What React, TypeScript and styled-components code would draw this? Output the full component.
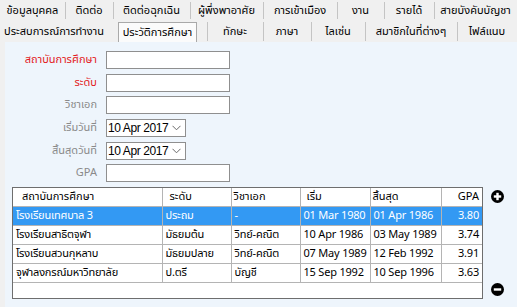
import React from "react";
import styled, { createGlobalStyle } from "styled-components";

const GlobalStyle = createGlobalStyle`
  html, body { margin: 0; padding: 0; }
  body {
    background: #f0f0f0;
    font-family: "Tahoma", "Noto Sans Thai", "Liberation Sans", "Noto Sans", sans-serif;
    font-size: 11px;
    color: #000;
  }
`;

const Root = styled.div`
  width: 517px;
  height: 307px;
  display: flex;
  flex-direction: column;
  overflow: hidden;
  background: #f0f0f0;
`;

const TabRow = styled.div<{ $h: number }>`
  display: flex;
  height: ${(p) => p.$h}px;
  align-items: stretch;
`;

const Tab = styled.div<{ $w: number; $sep?: boolean }>`
  position: relative;
  width: ${(p) => p.$w}px;
  flex: none;
  display: flex;
  align-items: center;
  justify-content: center;
  white-space: nowrap;
  color: #000;
  ${(p) =>
    p.$sep
      ? `&::before { content: ""; position: absolute; left: 0; top: 2px; bottom: 1px; width: 1px; background: #c4c4c4; }`
      : ""}
`;

const ActiveTab = styled.div<{ $w: number; $ml: number }>`
  width: ${(p) => p.$w}px;
  margin-left: ${(p) => p.$ml}px;
  margin-top: 2px;
  flex: none;
  box-sizing: border-box;
  border: 1px solid #a9a9a9;
  border-bottom: none;
  background: #fbfbfb;
  display: flex;
  align-items: center;
  justify-content: center;
  white-space: nowrap;
`;

const Spacer = styled.div<{ $w: number }>`
  width: ${(p) => p.$w}px;
  flex: none;
`;

const Panel = styled.div`
  flex: 1;
  margin-left: 5px;
  background: #eef5fc;
  display: flex;
  flex-direction: column;
  padding-top: 9px;
  box-sizing: border-box;
`;

const Form = styled.div`
  display: grid;
  grid-template-columns: 92px auto;
  column-gap: 9px;
  align-items: start;
`;

const Label = styled.div<{ $req?: boolean; $h: number }>`
  height: ${(p) => p.$h}px;
  line-height: 18px;
  text-align: right;
  color: ${(p) => (p.$req ? "#e31b23" : "#8a8a8a")};
  white-space: nowrap;
`;

const FieldCell = styled.div<{ $h: number }>`
  height: ${(p) => p.$h}px;
`;

const TextInput = styled.div<{ $w: number }>`
  width: ${(p) => p.$w}px;
  height: 18px;
  box-sizing: border-box;
  background: #fff;
  border: 1px solid #8f8f8f;
`;

const DateBox = styled.div`
  width: 80px;
  height: 18px;
  box-sizing: border-box;
  background: #fff;
  border: 1px solid #8f8f8f;
  display: flex;
  align-items: center;
  justify-content: space-between;
  padding: 0 4px 0 1px;
  font-family: "Liberation Sans", Arial, sans-serif;
  font-size: 12px;
  letter-spacing: -0.4px;
  white-space: nowrap;
  color: #000;
`;

const Chevron = styled.svg`
  width: 9px;
  height: 6px;
  flex: none;
`;

const Bottom = styled.div`
  display: flex;
  align-items: stretch;
  margin-top: 5px;
  margin-left: 7px;
  gap: 8px;
`;

const GridBox = styled.div`
  width: 471px;
  height: 112px;
  box-sizing: border-box;
  border: 1px solid #6e6e6e;
  background: #fff;
  overflow: hidden;
`;

const Table = styled.table`
  border-collapse: collapse;
  table-layout: fixed;
  width: 470px;
`;

const Th = styled.th<{ $w: number; $right?: boolean; $pad: number }>`
  width: ${(p) => p.$w}px;
  height: 18px;
  padding: 0 ${(p) => (p.$right ? 4 : 0)}px 0 ${(p) => p.$pad}px;
  font-weight: normal;
  text-align: ${(p) => (p.$right ? "right" : "left")};
  border-right: 1px solid #b4b4b4;
  border-bottom: 1px solid #b4b4b4;
  white-space: nowrap;
  box-sizing: border-box;
  &:last-child { border-right: none; }
`;

const Tr = styled.tr<{ $sel?: boolean }>`
  background: ${(p) => (p.$sel ? "#3399f3" : "#fff")};
  color: ${(p) => (p.$sel ? "#fff" : "#000")};
`;

const Td = styled.td<{ $right?: boolean }>`
  height: 18px;
  padding: 0 ${(p) => (p.$right ? 4 : 1)}px 0 3px;
  text-align: ${(p) => (p.$right ? "right" : "left")};
  border-right: 1px solid #b4b4b4;
  border-bottom: 1px solid #b4b4b4;
  white-space: nowrap;
  overflow: hidden;
  letter-spacing: -0.2px;
  &:last-child { border-right: none; }
`;

const IconCol = styled.div`
  display: flex;
  flex-direction: column;
  justify-content: space-between;
  padding: 3px 0 3px;
`;

const RoundIcon = styled.svg`
  width: 13px;
  height: 13px;
  display: block;
`;

const Plus = () => (
  <RoundIcon viewBox="0 0 13 13">
    <circle cx="6.5" cy="6.5" r="6.5" fill="#000" />
    <rect x="5.3" y="2.8" width="2.4" height="7.4" fill="#fff" />
    <rect x="2.8" y="5.3" width="7.4" height="2.4" fill="#fff" />
  </RoundIcon>
);

const Minus = () => (
  <RoundIcon viewBox="0 0 13 13">
    <circle cx="6.5" cy="6.5" r="6.5" fill="#000" />
    <rect x="2.8" y="5.3" width="7.4" height="2.4" fill="#fff" />
  </RoundIcon>
);

const DateField = ({ value }: { value: string }) => (
  <DateBox>
    <span>{value}</span>
    <Chevron viewBox="0 0 9 6">
      <polyline points="0.5,0.8 4.5,4.8 8.5,0.8" fill="none" stroke="#6a6a6a" strokeWidth="1" />
    </Chevron>
  </DateBox>
);

const row1 = [
  { t: "ข้อมูลบุคคล", w: 65 },
  { t: "ติดต่อ", w: 48 },
  { t: "ติดต่อฉุกเฉิน", w: 77 },
  { t: "ผู้พึ่งพาอาศัย", w: 73 },
  { t: "การเข้าเมือง", w: 74 },
  { t: "งาน", w: 47 },
  { t: "รายได้", w: 50 },
  { t: "สายบังคับบัญชา", w: 83 },
];

const row2After = [
  { t: "ทักษะ", w: 56 },
  { t: "ภาษา", w: 48 },
  { t: "ไลเซ่น", w: 54 },
  { t: "สมาชิกในที่ต่างๆ", w: 92 },
  { t: "ไฟล์แนบ", w: 60 },
];

const cols = [
  { t: "สถาบันการศึกษา", w: 149, pad: 9 },
  { t: "ระดับ", w: 69, pad: 7 },
  { t: "วิชาเอก", w: 69, pad: 2 },
  { t: "เริ่ม", w: 70, pad: 6 },
  { t: "สิ้นสุด", w: 71, pad: 2 },
  { t: "GPA", w: 42, pad: 0, right: true },
];

const rows = [
  ["โรงเรียนเทศบาล 3", "ประถม", "-", "01 Mar 1980", "01 Apr 1986", "3.80"],
  ["โรงเรียนสาธิตจุฬา", "มัธยมต้น", "วิทย์-คณิต", "10 Apr 1986", "03 May 1989", "3.74"],
  ["โรงเรียนสวนกุหลาบ", "มัธยมปลาย", "วิทย์-คณิต", "07 May 1989", "12 Feb 1992", "3.91"],
  ["จุฬาลงกรณ์มหาวิทยาลัย", "ป.ตรี", "บัญชี", "15 Sep 1992", "10 Sep 1996", "3.63"],
];

export default function App() {
  return (
    <Root>
      <GlobalStyle />
      <TabRow $h={20}>
        {row1.map((r, i) => (
          <Tab key={r.t} $w={r.w} $sep={i > 0}>
            {r.t}
          </Tab>
        ))}
      </TabRow>
      <TabRow $h={22}>
        <Tab $w={108}>ประสบการณ์การทำงาน</Tab>
        <ActiveTab $w={79} $ml={10}>ประวัติการศึกษา</ActiveTab>
        <Spacer $w={10} />
        {row2After.map((r) => (
          <Tab key={r.t} $w={r.w} $sep>
            {r.t}
          </Tab>
        ))}
      </TabRow>
      <Panel>
        <Form>
          <Label $req $h={23}>สถาบันการศึกษา</Label>
          <FieldCell $h={23}><TextInput $w={124} /></FieldCell>
          <Label $req $h={22}>ระดับ</Label>
          <FieldCell $h={22}><TextInput $w={124} /></FieldCell>
          <Label $h={23}>วิชาเอก</Label>
          <FieldCell $h={23}><TextInput $w={124} /></FieldCell>
          <Label $h={23}>เริ่มวันที่</Label>
          <FieldCell $h={23}><DateField value="10 Apr 2017" /></FieldCell>
          <Label $h={22}>สิ้นสุดวันที่</Label>
          <FieldCell $h={22}><DateField value="10 Apr 2017" /></FieldCell>
          <Label $h={18}>GPA</Label>
          <FieldCell $h={18}><TextInput $w={124} /></FieldCell>
        </Form>
        <Bottom>
          <GridBox>
            <Table>
              <thead>
                <tr>
                  {cols.map((c) => (
                    <Th key={c.t} $w={c.w} $pad={c.pad} $right={c.right}>
                      {c.t}
                    </Th>
                  ))}
                </tr>
              </thead>
              <tbody>
                {rows.map((r, i) => (
                  <Tr key={r[0]} $sel={i === 0}>
                    {r.map((c, j) => (
                      <Td key={j} $right={j === 5}>
                        {c}
                      </Td>
                    ))}
                  </Tr>
                ))}
              </tbody>
            </Table>
          </GridBox>
          <IconCol>
            <Plus />
            <Minus />
          </IconCol>
        </Bottom>
      </Panel>
    </Root>
  );
}
